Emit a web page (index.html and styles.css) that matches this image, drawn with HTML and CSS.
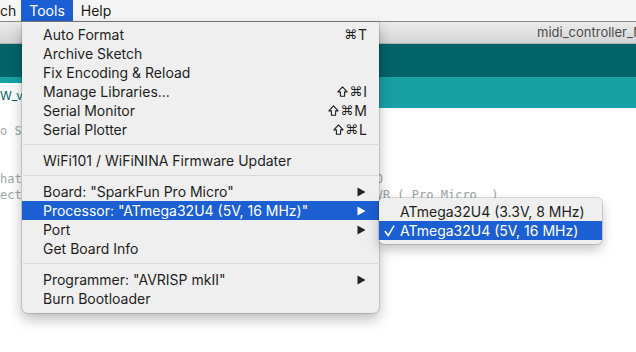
FILE: index.html
```html
<!DOCTYPE html>
<html>
<head>
<meta charset="utf-8">
<link rel="stylesheet" href="styles.css">
</head>
<body>
<div class="screen">
  <div class="menubar">
    <span class="mb-item mb-cut">ch</span>
    <span class="mb-item active">Tools</span>
    <span class="mb-item">Help</span>
  </div>
  <div class="window">
    <div class="titlebar"><span class="title">midi_controller_MIDI_NEW_v2</span></div>
    <div class="toolbar"></div>
    <div class="tabs"><div class="tab">W_v2</div></div>
    <div class="editor"><div class="line">o Si</div><div class="line"> </div><div class="line"> </div><div class="line">hat                                                 O</div><div class="line">ect                                                 VR ( Pro Micro  )</div></div>
  </div>

  <div class="menu">
    <div class="item"><span class="label">Auto Format</span><span class="key"><span class="sym">⌘</span>T</span></div>
    <div class="item"><span class="label">Archive Sketch</span></div>
    <div class="item"><span class="label">Fix Encoding &amp; Reload</span></div>
    <div class="item"><span class="label">Manage Libraries...</span><span class="key"><svg class="shift" width="11" height="11" viewBox="0 0 11 11"><path d="M5.5 0.9 L10.1 5.9 H7.6 V10.2 H3.4 V5.9 H0.9 Z"/></svg><span class="sym">⌘</span>I</span></div>
    <div class="item"><span class="label">Serial Monitor</span><span class="key"><svg class="shift" width="11" height="11" viewBox="0 0 11 11"><path d="M5.5 0.9 L10.1 5.9 H7.6 V10.2 H3.4 V5.9 H0.9 Z"/></svg><span class="sym">⌘</span>M</span></div>
    <div class="item"><span class="label">Serial Plotter</span><span class="key"><svg class="shift" width="11" height="11" viewBox="0 0 11 11"><path d="M5.5 0.9 L10.1 5.9 H7.6 V10.2 H3.4 V5.9 H0.9 Z"/></svg><span class="sym">⌘</span>L</span></div>
    <div class="sep"></div>
    <div class="item"><span class="label">WiFi101 / WiFiNINA Firmware Updater</span></div>
    <div class="sep"></div>
    <div class="item"><span class="label">Board: "SparkFun Pro Micro"</span><svg class="arrow" width="9" height="10" viewBox="0 0 9 10"><path d="M0.5 0.5 L8.5 5 L0.5 9.5 Z"/></svg></div>
    <div class="item sel"><span class="label">Processor: "ATmega32U4 (5V, 16 MHz)"</span><svg class="arrow" width="9" height="10" viewBox="0 0 9 10"><path d="M0.5 0.5 L8.5 5 L0.5 9.5 Z"/></svg></div>
    <div class="item"><span class="label">Port</span><svg class="arrow" width="9" height="10" viewBox="0 0 9 10"><path d="M0.5 0.5 L8.5 5 L0.5 9.5 Z"/></svg></div>
    <div class="item"><span class="label">Get Board Info</span></div>
    <div class="sep"></div>
    <div class="item"><span class="label">Programmer: "AVRISP mkII"</span><svg class="arrow" width="9" height="10" viewBox="0 0 9 10"><path d="M0.5 0.5 L8.5 5 L0.5 9.5 Z"/></svg></div>
    <div class="item"><span class="label">Burn Bootloader</span></div>
  </div>

  <div class="submenu">
    <div class="sub-item"><span class="check"></span><span class="label">ATmega32U4 (3.3V, 8 MHz)</span></div>
    <div class="sub-item sel"><span class="check"><svg width="11" height="12" viewBox="0 0 11 12"><path d="M1.2 6.6 L4.2 10.6 L9.8 1.2"/></svg></span><span class="label">ATmega32U4 (5V, 16 MHz)</span></div>
  </div>
</div>
</body>
</html>
```

FILE: styles.css
```css
html, body {
  margin: 0;
  padding: 0;
  background: #ffffff;
}

.screen {
  width: 636px;
  height: 352px;
  position: relative;
  overflow: hidden;
  font-family: Inter, "Liberation Sans", sans-serif;
  background: #ffffff;
}

.menubar {
  height: 22px;
  box-sizing: border-box;
  background: #f5f5f5;
  border-bottom: 1px solid #8a8a8a;
  display: flex;
  align-items: stretch;
  font-size: 14px;
  color: #1a1a1a;
}

.mb-item {
  padding: 0 8px;
  line-height: 21px;
}

.mb-item.mb-cut {
  padding: 0 5px 0 0;
}

.mb-item.active {
  background: #1c5fd2;
  color: #ffffff;
}

.titlebar {
  height: 22px;
  box-sizing: border-box;
  background: linear-gradient(#ebebeb, #d5d5d5);
  border-bottom: 1px solid #b3b3b3;
  font-size: 13px;
  line-height: 21px;
  color: #4b4b4b;
  padding-left: 537px;
  white-space: nowrap;
  overflow: hidden;
}

.toolbar {
  height: 33px;
  background: #006468;
}

.tabs {
  height: 31px;
  background: #17a1a5;
  display: flex;
  align-items: flex-end;
}

.tab {
  height: 25px;
  width: 160px;
  background: #ffffff;
  color: #006468;
  font-size: 12px;
  line-height: 25px;
}

.editor {
  background: #ffffff;
  padding-top: 15px;
  font-family: "DejaVu Sans Mono", monospace;
  font-size: 12px;
  line-height: 16px;
  color: #9aa7a8;
  white-space: pre;
}

.line {
  height: 16px;
}

.menu {
  position: absolute;
  left: 22px;
  top: 22px;
  width: 357px;
  box-sizing: border-box;
  padding: 3px 0 5px;
  background: #efefef;
  border-radius: 0 0 6px 6px;
  box-shadow: 0 0 0 1px rgba(0, 0, 0, 0.13), 0 6px 14px rgba(0, 0, 0, 0.28);
  font-size: 14px;
  color: #1e1e1e;
}

.item {
  height: 19px;
  display: flex;
  align-items: center;
  padding: 0 12px 0 21px;
}

.item .label {
  flex: 1;
  white-space: nowrap;
}

.item.sel {
  background: #1c5fd2;
  color: #ffffff;
}

.key {
  white-space: nowrap;
  display: flex;
  align-items: center;
}

.shift {
  fill: none;
  stroke: #1e1e1e;
  stroke-width: 1.1;
  stroke-linejoin: round;
  margin-right: 1px;
}

.sym {
  font-family: "DejaVu Sans", sans-serif;
  font-size: 13px;
  margin-right: 1px;
}

.arrow {
  fill: #222222;
  margin-right: 1px;
}

.item.sel .arrow {
  fill: #ffffff;
}

.sep {
  height: 1px;
  background: #d8d8d8;
  margin: 5px 1px 6px;
}

.submenu {
  position: absolute;
  left: 379px;
  top: 198px;
  width: 223px;
  box-sizing: border-box;
  padding: 4px 0;
  background: #efefef;
  border-radius: 5px;
  box-shadow: 0 0 0 1px rgba(0, 0, 0, 0.13), 0 5px 12px rgba(0, 0, 0, 0.25);
  font-size: 14px;
  color: #1e1e1e;
}

.sub-item {
  height: 19px;
  display: flex;
  align-items: center;
}

.sub-item.sel {
  background: #1c5fd2;
  color: #ffffff;
}

.check {
  width: 16px;
  padding-left: 5px;
  display: flex;
  align-items: center;
}

.check svg {
  fill: none;
  stroke: #ffffff;
  stroke-width: 1.6;
  stroke-linecap: round;
  stroke-linejoin: round;
}

.sub-item .label {
  white-space: nowrap;
}
```
